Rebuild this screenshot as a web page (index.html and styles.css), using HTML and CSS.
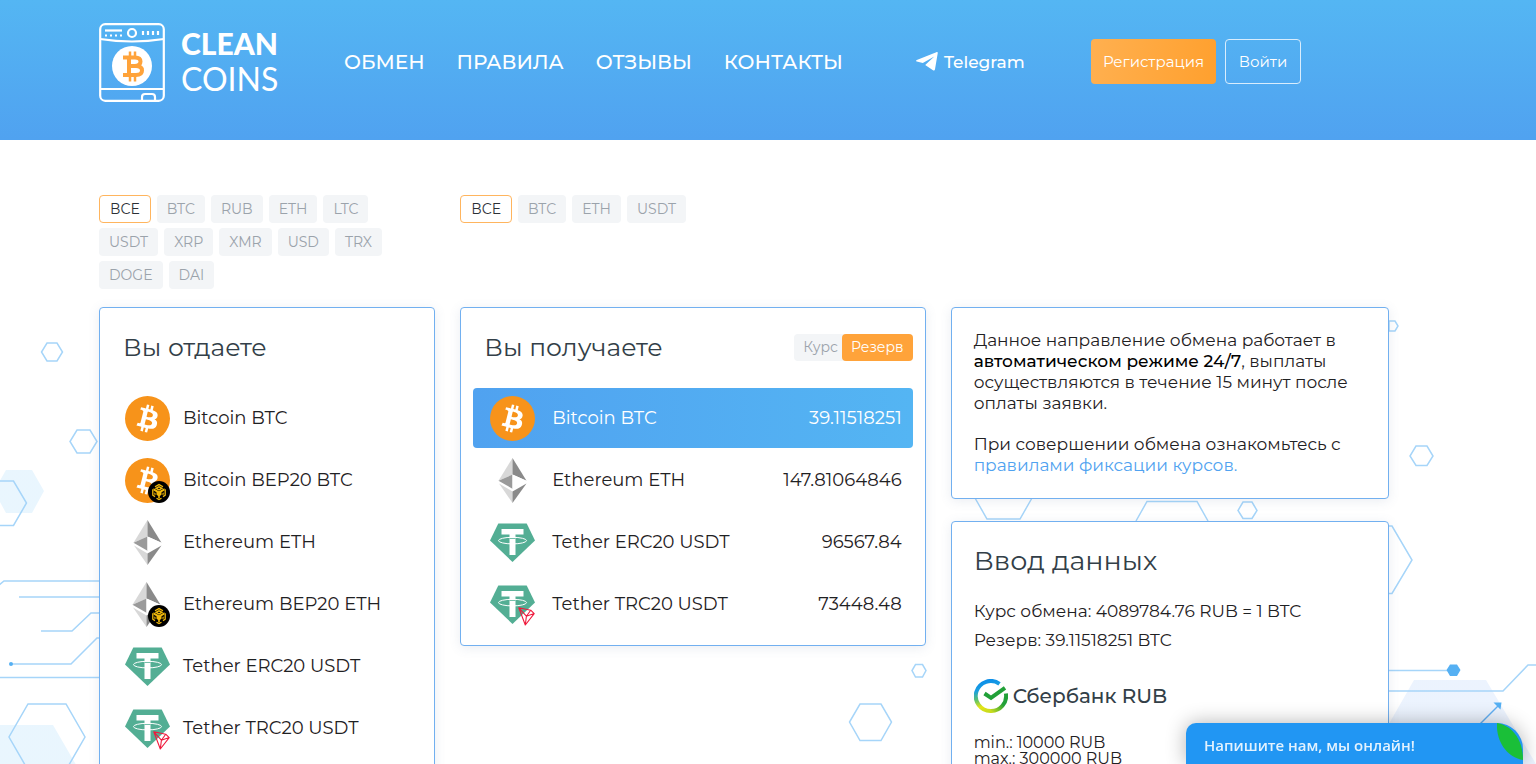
FILE: index.html
```html
<!DOCTYPE html>
<html lang="ru">
<head>
<meta charset="utf-8">
<meta name="viewport" content="width=device-width, initial-scale=1">
<title>Clean Coins</title>
<link rel="stylesheet" href="styles.css">
</head>
<body>
<svg class="defs" aria-hidden="true">
  <defs>
    <symbol id="btc" viewBox="0 0 32 32">
      <circle cx="16" cy="16" r="16" fill="#f7931a"/>
      <path fill="#fff" d="M23.189 14.02c.314-2.096-1.283-3.223-3.465-3.975l.708-2.84-1.728-.43-.69 2.765c-.454-.114-.92-.22-1.385-.326l.695-2.783L15.596 6l-.708 2.839c-.376-.086-.746-.17-1.104-.26l.002-.009-2.384-.595-.46 1.846s1.283.294 1.256.312c.7.175.826.638.805 1.006l-.806 3.235c.048.012.11.03.18.057l-.183-.045-1.13 4.532c-.086.212-.303.531-.793.41.018.025-1.256-.313-1.256-.313l-.858 1.978 2.25.561c.418.105.828.215 1.231.318l-.715 2.872 1.727.43.708-2.84c.472.127.93.245 1.378.357l-.706 2.828 1.728.43.715-2.866c2.948.558 5.164.333 6.097-2.333.752-2.146-.037-3.385-1.588-4.192 1.13-.26 1.98-1.003 2.207-2.538zm-3.95 5.538c-.533 2.147-4.148.986-5.32.695l.95-3.805c1.172.293 4.929.872 4.37 3.11zm.535-5.569c-.487 1.953-3.495.96-4.47.717l.86-3.45c.975.243 4.118.696 3.61 2.733z"/>
    </symbol>
    <symbol id="eth" viewBox="0 0 45 45">
      <path fill="#d8d8d8" d="M22.500 0v16.500L8.500 22.800z"/>
      <path fill="#8a8a8a" d="M22.500 0v16.500l14 6.300z"/>
      <path fill="#9a9a9a" d="M22.500 16.500v14.300l-14-8z"/>
      <path fill="#fff" d="M22.500 16.500v14.300l14-8z"/>
      <path fill="#d8d8d8" d="M22.500 33.500V45L9 25.500z"/>
      <path fill="#8a8a8a" d="M22.500 33.500V45L36.500 25.500z"/>
    </symbol>
    <symbol id="usdt" viewBox="0 0 45 45">
      <path fill="#53ae94" d="M8.300 3.500h28.400L45 20.500 22.500 42 0 20.500z"/>
      <path fill="#fff" d="M11.500 9h22v5.400h-8V35h-6V14.400h-8z"/>
      <ellipse cx="22.500" cy="20.600" rx="14" ry="3.300" fill="none" stroke="#fff" stroke-width="1"/>
      <path stroke="#53ae94" stroke-width=".8" d="M19.500 18.500h6"/>
    </symbol>
    <symbol id="bep" viewBox="0 0 22 22">
      <circle cx="11" cy="11" r="11" fill="#000"/>
      <g fill="none" stroke="#f0b90b" stroke-width="1.300">
        <path d="M7 5.800 11 3.600l4 2.200M8 7.300l3-1.500 3 1.500-3 1.600z"/>
        <path d="M4.800 8.200v6l2.200 1.400M17.200 8.200v6L15 15.600M8.500 17.200l2.500 1.400 2.500-1.400"/>
      </g>
      <path fill="#f0b90b" d="M5.500 7.300 11 10.200l5.500-2.900v2.200l-3 1.700v2.500L11.800 15v2.200h-1.600V15l-1.700-1.300v-2.500l-3-1.700zM6.300 11.400l1.200.7v2.200l-1.200-.7zM15.700 11.400l-1.200.7v2.200l1.200-.7z"/>
    </symbol>
    <symbol id="tron" viewBox="0 0 17 19">
      <path fill="none" stroke="#ef1a3c" stroke-width="1.100" stroke-linejoin="round" d="M.8.800 12.700 3.200l3.500 3.400L7.300 18zM.8.800l7.600 8.400L7.300 18M8.400 9.200l7.800-2.600M8.400 9.200l4.300-6"/>
    </symbol>
    <linearGradient id="sberRing" x1=".4" y1="0" x2=".6" y2="1">
      <stop offset="0" stop-color="#0d8fe8"/><stop offset=".25" stop-color="#1a9fe0"/><stop offset=".55" stop-color="#5fc46a"/><stop offset=".8" stop-color="#e6e414"/><stop offset="1" stop-color="#c9dc1e"/>
    </linearGradient>
    <linearGradient id="sberRight" x1="0" y1="1" x2="1" y2="0">
      <stop offset="0" stop-color="#c9dc1e"/><stop offset=".6" stop-color="#21a038"/>
    </linearGradient>
    <linearGradient id="pale"><stop offset="0" stop-color="#e9f6fe"/><stop offset="1" stop-color="#ecf3fe"/></linearGradient>
  </defs>
</svg>

<div class="page">
  <header class="header">
    <a class="logo" href="#">
      <svg class="logo-mark" viewBox="0 0 66 79" aria-hidden="true">
        <g fill="none" stroke="#fff" stroke-width="2.200">
          <rect x="1.200" y="1.200" width="63.600" height="76.600" rx="5"/>
          <path d="M1 16q32 5 64 0M1 66h64M43 78v-4q0-3 3-3h7q3 0 3 3v4"/>
          <circle cx="33" cy="10" r="4"/>
          <path d="M6 7.500h17"/>
          <path d="M6 12.500h17" stroke-dasharray="2 3"/>
          <path d="M44 8v4M49 8v4M54 8v4M59 8v4"/>
        </g>
        <circle cx="33" cy="43" r="20" fill="#fff"/>
        <g fill="none" stroke="#ffa33a" stroke-width="4">
          <path d="M24 34.500h12q5.500 0 5.500 4t-5.500 4.500h-7 8q6 0 6 4.500T37 52H24M30 34v18"/>
          <path stroke-width="2.500" d="M31 28.500V34M36 28.500V34M31 53v5.500M36 53v5.500"/>
        </g>
      </svg>
      <span class="logo-text"><strong>CLEAN</strong><span>COINS</span></span>
    </a>
    <nav class="nav">
      <a href="#">ОБМЕН</a>
      <a href="#">ПРАВИЛА</a>
      <a href="#">ОТЗЫВЫ</a>
      <a href="#">КОНТАКТЫ</a>
    </nav>
    <a class="telegram" href="#">
      <svg viewBox="0 0 22 19" aria-hidden="true"><path fill="#fff" d="M21.800.800 19 17.300c-.2 1.200-1 1.500-2 .900L9.200 13 18.300 4.500 6.800 11 .8 9.600C-.3 9.200-.2 8.400.8 7.900L20.300.200c.9-.3 1.600-.1 1.500.6z"/></svg>
      Telegram
    </a>
    <div class="auth">
      <button class="btn btn-register" type="button">Регистрация</button>
      <button class="btn btn-login" type="button">Войти</button>
    </div>
  </header>

  <main class="main">
    <svg class="backdrop" viewBox="0 140 1536 624" aria-hidden="true">
      <g fill="url(#pale)">
        <path d="M6 470h26l12 21-12 22H6L-6 491zM-40 725H53l40 69H-40zM1414 680h72l50 84H1366z"/>
      </g>
      <g fill="none" stroke="#a6d5f9" stroke-width="1.500">
        <path d="M47 343h10l5.500 9-5.500 9H47l-5.500-9zM77 430h13l7 11.500-7 11.500H77l-7-11.500zM-10 481h23.500L26.500 503l-13 22.500H-10z"/>
        <path d="M-2 586l6-5h100M19 597h85M41 631h31l19-18h13M11 664h60l26-26h7M0 677.500h104M28 704h38l19 33-19 33H28L9 737z"/>
        <path d="M1389 321h6l3 5-3 5h-6zM1416 446h11l6 10-6 9.500h-11l-6-9.500zM1243 502h9l5 8.500-5 8h-9l-5-8zM975 498l12 21h33l12-21M1136 521l11-19.500h50l11 19.500M1385 526h7l20 34-20 33.500h-7"/>
        <path d="M1389 670.500h60M1389 691h114l25-26h10"/>
        <path d="M915.500 664.500h7l3.500 6-3.500 6.500h-7l-3.500-6.500zM860 704h21l10.500 18L881 740.500h-21L849.500 722z"/>
        <path stroke="#62b0f3" d="M1475 729l23-23"/>
      </g>
      <g fill="#55b0f3"><circle cx="11" cy="664" r="2"/><path d="M1450 664.500h7l3.500 5.500-3.500 6h-7l-3.500-6zM1493.500 702.500h8l-1 7z"/></g>
    </svg>

    <div class="exchange">
      <div class="filters filters-give">
        <button class="chip chip-on" type="button">ВСЕ</button>
        <button class="chip" type="button">BTC</button>
        <button class="chip" type="button">RUB</button>
        <button class="chip" type="button">ETH</button>
        <button class="chip" type="button">LTC</button>
        <button class="chip" type="button">USDT</button>
        <button class="chip" type="button">XRP</button>
        <button class="chip" type="button">XMR</button>
        <button class="chip" type="button">USD</button>
        <button class="chip" type="button">TRX</button>
        <button class="chip" type="button">DOGE</button>
        <button class="chip" type="button">DAI</button>
      </div>
      <div class="filters filters-get">
        <button class="chip chip-on" type="button">ВСЕ</button>
        <button class="chip" type="button">BTC</button>
        <button class="chip" type="button">ETH</button>
        <button class="chip" type="button">USDT</button>
      </div>

      <section class="card give">
        <div class="card-head"><h2>Вы отдаете</h2></div>
        <div class="coins">
          <button class="coin" type="button"><svg class="coin-icon" viewBox="0 0 45 45"><use href="#btc"/></svg>Bitcoin BTC</button>
          <button class="coin" type="button"><svg class="coin-icon" viewBox="0 0 45 45"><use href="#btc"/><use href="#bep" x="23" y="23" width="22" height="22"/></svg>Bitcoin BEP20 BTC</button>
          <button class="coin" type="button"><svg class="coin-icon" viewBox="0 0 45 45"><use href="#eth"/></svg>Ethereum ETH</button>
          <button class="coin" type="button"><svg class="coin-icon" viewBox="0 0 45 45"><use href="#eth" x="-1"/><use href="#bep" x="23" y="23" width="22" height="22"/></svg>Ethereum BEP20 ETH</button>
          <button class="coin" type="button"><svg class="coin-icon" viewBox="0 0 45 45"><use href="#usdt"/></svg>Tether ERC20 USDT</button>
          <button class="coin" type="button"><svg class="coin-icon" viewBox="0 0 45 45"><use href="#usdt"/><use href="#tron" x="28" y="25" width="17" height="19"/></svg>Tether TRC20 USDT</button>
        </div>
      </section>

      <section class="card get">
        <div class="card-head">
          <h2>Вы получаете</h2>
          <div class="switch">
            <button type="button">Курс</button>
            <button class="switch-on" type="button">Резерв</button>
          </div>
        </div>
        <div class="coins">
          <button class="coin coin-on" type="button"><svg class="coin-icon" viewBox="0 0 45 45"><use href="#btc"/></svg>Bitcoin BTC<span class="amount">39.11518251</span></button>
          <button class="coin" type="button"><svg class="coin-icon" viewBox="0 0 45 45"><use href="#eth"/></svg>Ethereum ETH<span class="amount">147.81064846</span></button>
          <button class="coin" type="button"><svg class="coin-icon" viewBox="0 0 45 45"><use href="#usdt"/></svg>Tether ERC20 USDT<span class="amount">96567.84</span></button>
          <button class="coin" type="button"><svg class="coin-icon" viewBox="0 0 45 45"><use href="#usdt"/><use href="#tron" x="28" y="25" width="17" height="19"/></svg>Tether TRC20 USDT<span class="amount">73448.48</span></button>
        </div>
      </section>

      <div class="side">
        <section class="card notice">
          <p>Данное направление обмена работает в<br><b>автоматическом режиме 24/7</b>, выплаты<br>осуществляются в течение 15 минут после<br>оплаты заявки.</p>
          <p>При совершении обмена ознакомьтесь с<br><a href="#">правилами фиксации курсов.</a></p>
        </section>
        <section class="card entry">
          <h2>Ввод данных</h2>
          <p class="fact">Курс обмена: 4089784.76 RUB = 1 BTC</p>
          <p class="fact">Резерв: 39.11518251 BTC</p>
          <h3>
            <svg viewBox="0 0 34 34" aria-hidden="true">
              <g fill="none" stroke-width="4">
                <path stroke="url(#sberRing)" d="M25.500 4.800A15 15 0 1 0 17 32"/>
                <path stroke="url(#sberRight)" d="M16.800 32A15 15 0 0 0 31.900 14.500"/>
                <path stroke="#21a038" d="M10.500 14.500 17 18.800 31 8.800"/>
              </g>
            </svg>
            Сбербанк RUB
          </h3>
          <p class="limit">min.: 10000 RUB</p>
          <p class="limit">max.: 300000 RUB</p>
        </section>
      </div>
    </div>
  </main>
</div>

<button class="chat" type="button">
  Напишите нам, мы онлайн!
  <svg class="chat-leaf" viewBox="0 0 26 37" aria-hidden="true"><path fill="#1abf38" d="M0 0C13 2 26 14 26 37 10 34-1 19 0 0z"/></svg>
</button>
</body>
</html>
```
FILE: styles.css
```css
* { box-sizing: border-box; }
body {
  margin: 0;
  background: #fff;
  color: #1f2123;
  font-family: Montserrat, Inter, "Open Sans", sans-serif;
}
button { font-family: inherit; cursor: pointer; border: 0; background: none; }
a { color: inherit; text-decoration: none; }
h2, h3, p { margin: 0; }
.defs { position: absolute; width: 0; height: 0; }
.page { height: 100vh; overflow: auto; scrollbar-width: none; }

.header {
  display: flex;
  align-items: flex-start;
  min-height: 140px;
  padding: 23px 99px 0;
  background: linear-gradient(#54b6f3, #50a2f0);
  color: #fff;
}
.logo { display: flex; gap: 16px; width: 245px; }
.logo-mark { width: 66px; height: 79px; }
.logo-text {
  display: flex;
  flex-direction: column;
  padding-top: 2px;
  font-family: Lato, sans-serif;
  font-size: 32px;
  line-height: 36px;
}
.logo-text strong { font-size: 30px; font-weight: 900; }
.nav, .telegram, .auth { display: flex; align-items: center; height: 77px; }
.nav { gap: 32px; width: 572px; font-size: 20px; font-weight: 500; }
.telegram { gap: 6px; width: 175px; font-size: 17px; font-weight: 500; }
.telegram svg { width: 22px; height: 19px; }
.auth { gap: 9px; }
.btn { height: 45px; border-radius: 4px; color: #fff; font-size: 15px; }
.btn-register { width: 125px; background: linear-gradient(100deg, #ffb050, #ffa02e); }
.btn-login { width: 76px; border: 1px solid #d9edfd; }

.main { position: relative; }
.backdrop { position: absolute; top: 0; left: 0; width: 100%; }
.exchange {
  position: relative;
  display: grid;
  grid-template-columns: 336fr 465fr 438fr;
  column-gap: 25px;
  row-gap: 18px;
  align-items: start;
  padding: 55px 147px 40px 99px;
}
.filters { display: flex; flex-wrap: wrap; gap: 5px 6px; }
.filters-give { padding-right: 32px; }
.chip {
  height: 28px;
  padding: 0 10px;
  border-radius: 4px;
  background: #f3f5f7;
  color: #9ba3ab;
  font-size: 14px;
}
.chip-on { border: 1px solid #ffb55e; background: #fff; color: #2b3036; }

.card {
  border: 1px solid #72b0f0;
  border-radius: 4px;
  background: #fff;
  box-shadow: 0 2px 12px rgba(80, 110, 150, .12);
}
.give, .get, .side { grid-row: 2; }
.give { min-height: 500px; }
.card-head {
  display: flex;
  align-items: center;
  justify-content: space-between;
  height: 80px;
  padding: 0 12px 2px 23px;
}
.side { grid-column: 3; display: grid; gap: 22px; }
h2 { color: #333f48; font-size: 25px; font-weight: 400; }
.coins { display: grid; gap: 2px; padding: 0 12px 11px; }
.coin {
  display: flex;
  align-items: center;
  gap: 13px;
  height: 60px;
  padding: 0 13px;
  border-radius: 4px;
  color: #1f2123;
  font-size: 18px;
  text-align: left;
}
.get .coin { gap: 17px; padding: 0 11px 0 17px; }
.coin-icon { flex: none; width: 45px; height: 45px; }
.amount { margin-left: auto; }
.get .coin-on { background: linear-gradient(90deg, #50a2f0, #54b5f3); color: #fff; }
.switch { display: flex; border-radius: 4px; background: #f3f5f7; }
.switch button {
  height: 27px;
  padding: 0 4px 0 9px;
  border-radius: 4px;
  color: #9ba3ab;
  font-size: 14px;
}
.switch .switch-on { padding: 0 9px; background: #ffa33a; color: #fff; }

.notice { padding: 22px; font-size: 17px; line-height: 21px; }
.notice p + p { margin-top: 20px; }
.notice b { color: #000; font-weight: 500; }
.notice a { color: #50a2f0; }
.entry { min-height: 290px; padding: 22px; }
.entry h2 { margin-bottom: 19px; font-size: 27px; line-height: 34px; }
.fact { font-size: 17px; line-height: 29px; }
.entry h3 {
  display: flex;
  align-items: center;
  gap: 5px;
  margin: 24px 0 22px;
  color: #333f48;
  font-size: 20px;
  font-weight: 500;
}
.entry h3 svg { width: 34px; height: 34px; }
.limit { font-size: 16px; line-height: 16px; }

.chat {
  position: fixed;
  right: 13px;
  bottom: 0;
  width: 337px;
  height: 41px;
  padding: 3px 18px 0;
  border-radius: 10px 26px 0 0;
  background: #2196f3;
  box-shadow: 0 0 20px rgba(0, 0, 0, .3);
  color: #e3f2fe;
  font-family: "Open Sans", "Noto Sans", sans-serif;
  font-size: 15px;
  font-weight: 600;
  text-align: left;
}
.chat-leaf { position: absolute; top: 0; right: 0; width: 26px; height: 37px; }
```
